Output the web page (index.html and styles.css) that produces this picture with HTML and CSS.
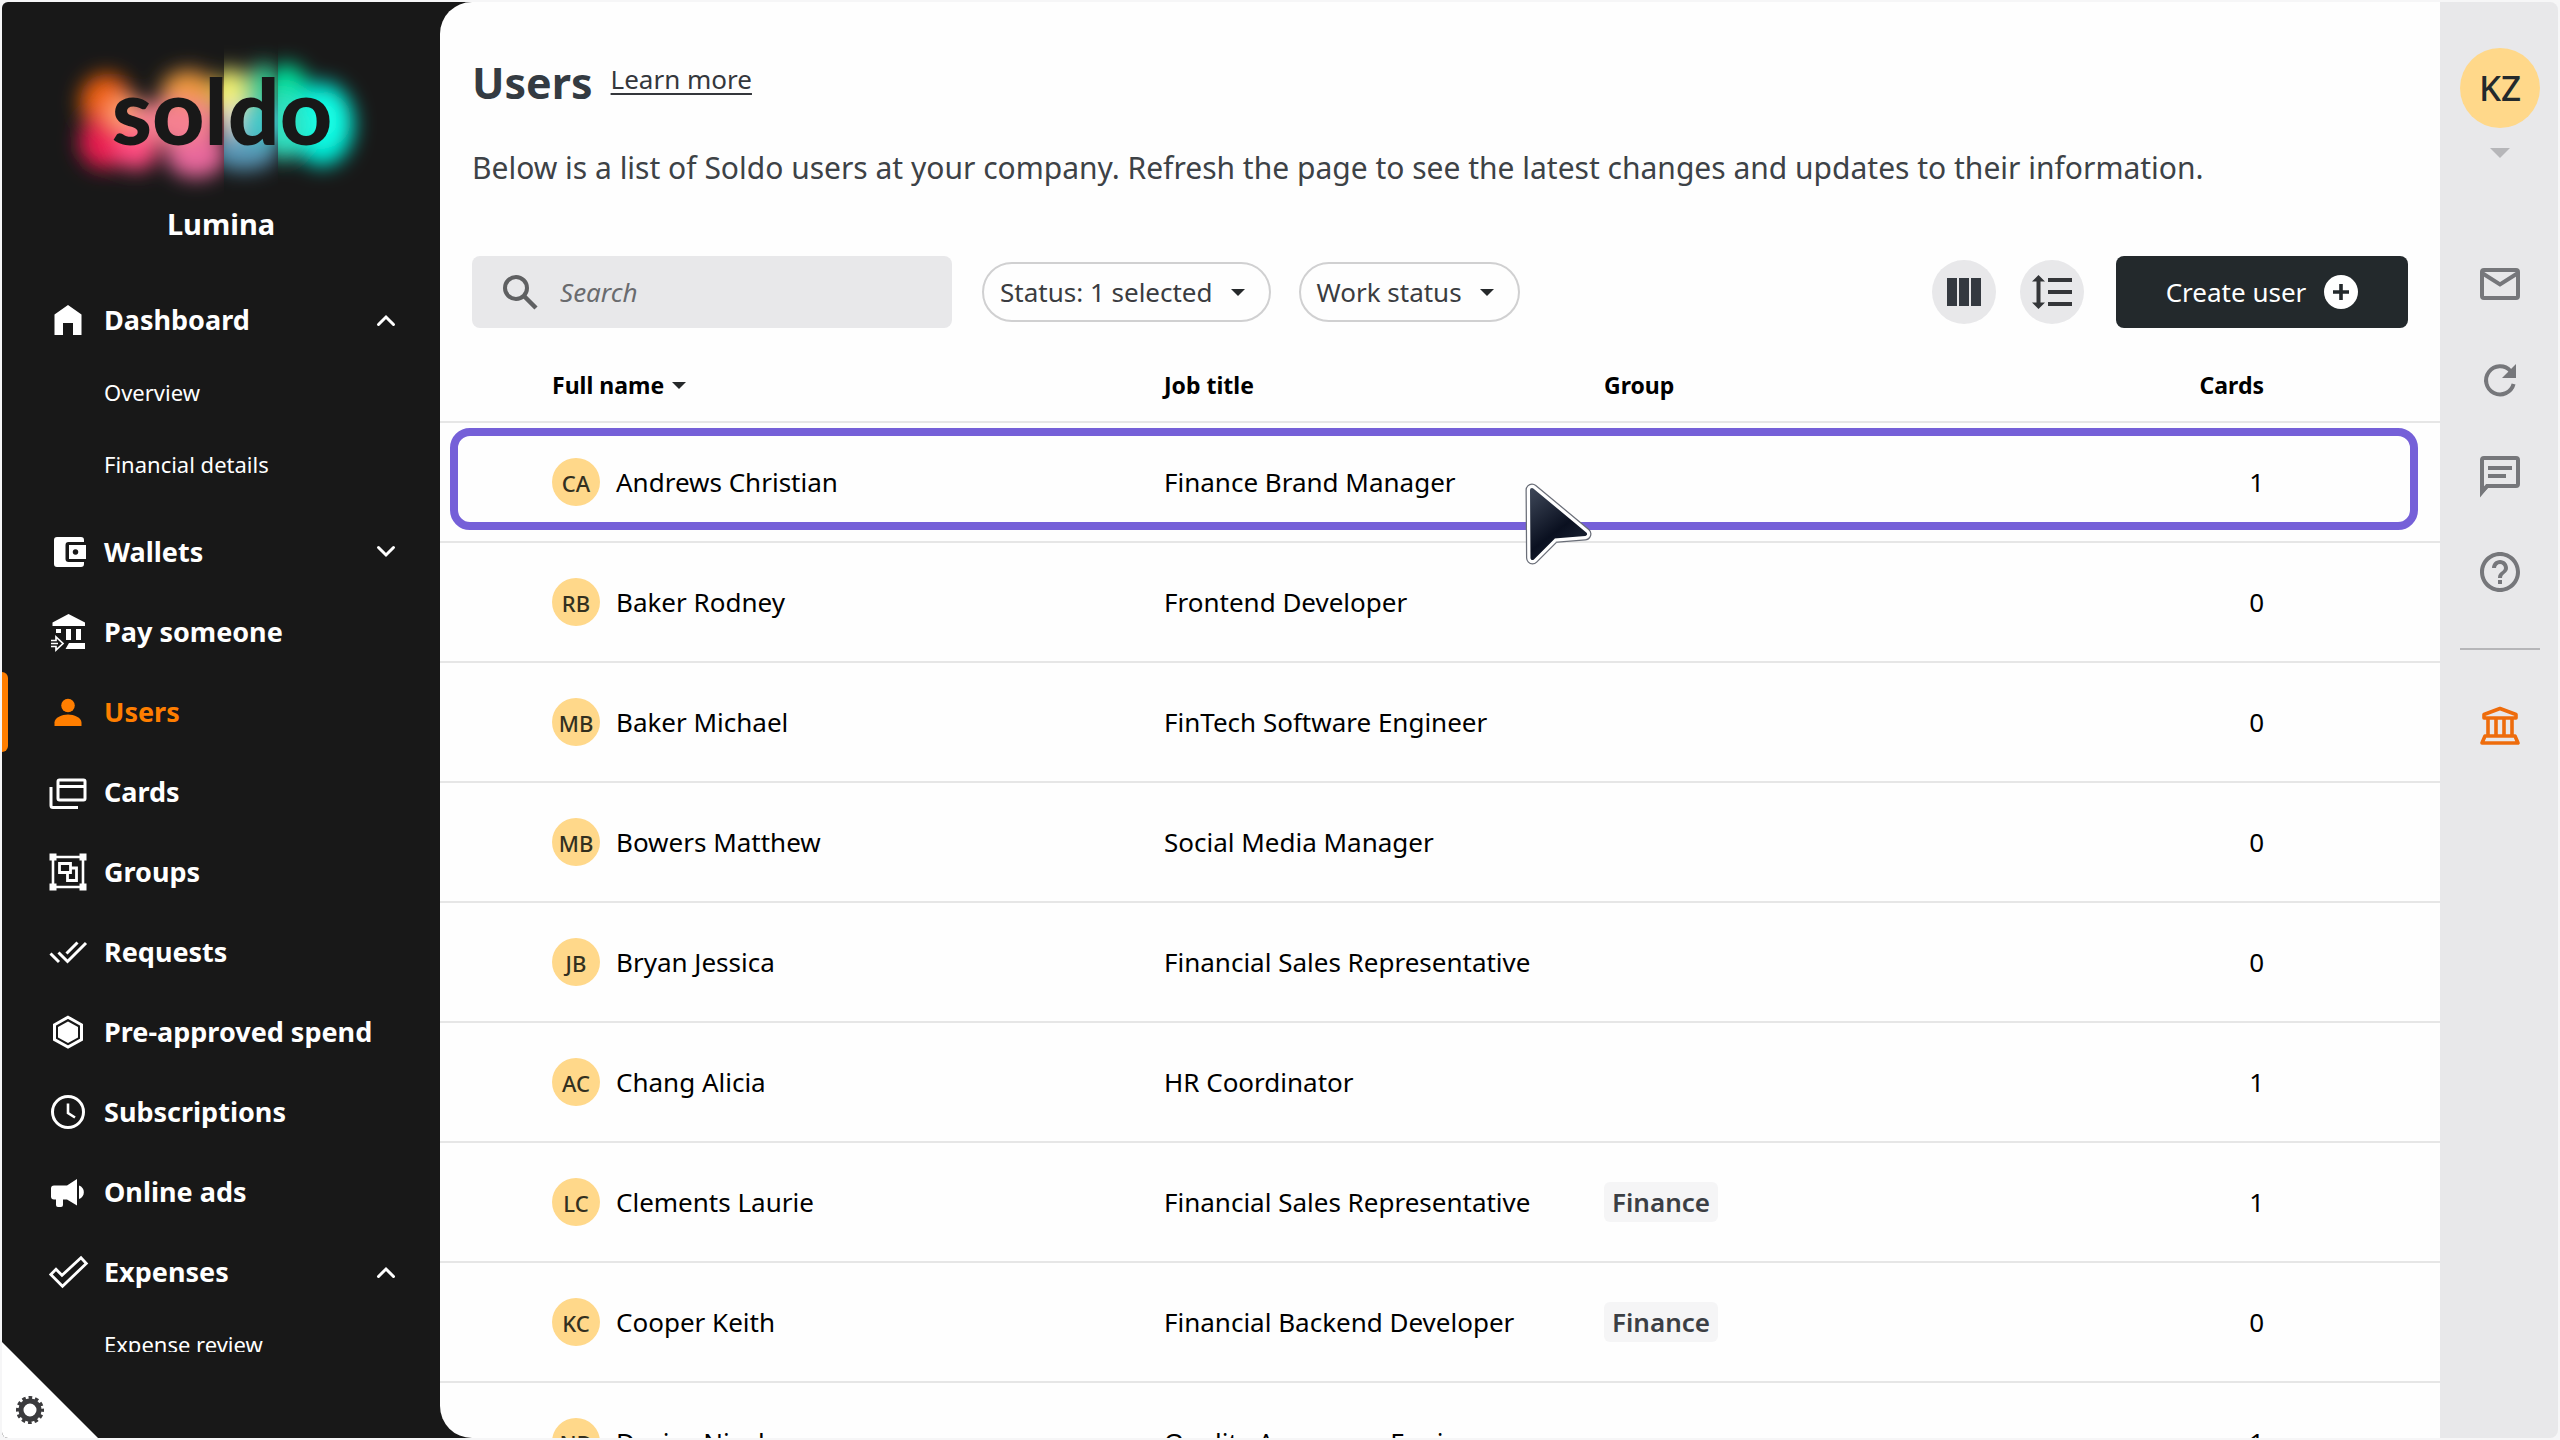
FILE: index.html
```
<!DOCTYPE html>
<html lang="en">
<head>
<meta charset="utf-8">
<meta name="viewport" content="width=device-width, initial-scale=1">
<title>Users - Soldo</title>
<link rel="stylesheet" href="styles.css">
</head>
<body>
<div class="app">
  <aside class="sidebar">
    <div class="brand">
      <svg class="brand-logo" viewBox="50 40 340 160" role="img" aria-label="soldo">
        <defs>
          <filter id="soft" x="-60%" y="-60%" width="220%" height="220%"><feGaussianBlur stdDeviation="10"/></filter>
          <clipPath id="clip-warm"><rect x="40" y="30" width="184" height="180"/></clipPath>
          <clipPath id="clip-mid"><rect x="224" y="30" width="54" height="180"/></clipPath>
          <clipPath id="clip-cool"><rect x="278" y="30" width="120" height="180"/></clipPath>
        </defs>
        <g clip-path="url(#clip-warm)">
          <g filter="url(#soft)">
            <ellipse cx="106" cy="102" rx="26" ry="28" fill="#f0600f"/>
            <ellipse cx="104" cy="142" rx="25" ry="27" fill="#e81f50"/>
            <ellipse cx="188" cy="92" rx="27" ry="22" fill="#f09a3c"/>
            <ellipse cx="136" cy="150" rx="22" ry="20" fill="#ff4a80"/>
            <ellipse cx="196" cy="154" rx="30" ry="24" fill="#e8689c"/>
            <ellipse cx="222" cy="94" rx="12" ry="18" fill="#c8b850"/>
            <ellipse cx="126" cy="114" rx="20" ry="18" fill="#ffa070"/>
            <ellipse cx="176" cy="122" rx="48" ry="22" fill="#f58090"/>
          </g>
        </g>
        <g clip-path="url(#clip-mid)">
          <g filter="url(#soft)">
            <ellipse cx="228" cy="94" rx="22" ry="26" fill="#f2f070"/>
            <ellipse cx="264" cy="88" rx="20" ry="24" fill="#30c890"/>
            <ellipse cx="244" cy="150" rx="34" ry="20" fill="#5898b8"/>
            <ellipse cx="232" cy="120" rx="16" ry="16" fill="#f0d8d0"/>
            <ellipse cx="264" cy="122" rx="28" ry="20" fill="#40c8c8"/>
          </g>
        </g>
        <g clip-path="url(#clip-cool)">
          <g filter="url(#soft)">
            <ellipse cx="286" cy="94" rx="24" ry="30" fill="#00e09c"/>
            <ellipse cx="322" cy="124" rx="32" ry="42" fill="#00ecd8"/>
            <ellipse cx="282" cy="126" rx="24" ry="34" fill="#30e0c0"/>
            <ellipse cx="326" cy="120" rx="18" ry="24" fill="#18ffe6"/>
          </g>
        </g>
        <text class="brand-word" x="222" y="145" text-anchor="middle">soldo</text>
      </svg>
      <p class="brand-name">Lumina</p>
    </div>
    <nav class="nav" aria-label="Main">
      <ul class="nav-list">
        <li>
          <a class="nav-item" href="#dashboard">
            <svg class="nav-icon" viewBox="0 0 36 36"><path d="M18 3L31.5 12.500V33H23V21H13V33H4.500V12.500z" fill="currentColor"/></svg>
            <span>Dashboard</span>
            <svg class="chevron" viewBox="0 0 18 12"><path d="M1.500 10.500L9 3l7.500 7.500"/></svg>
          </a>
          <ul class="sub-list">
            <li><a class="sub-item" href="#overview">Overview</a></li>
            <li><a class="sub-item" href="#financial">Financial details</a></li>
          </ul>
        </li>
        <li>
          <a class="nav-item" href="#wallets">
            <svg class="nav-icon" viewBox="0 0 36 36"><path fill="currentColor" d="M7 3H31a3 3 0 0 1 3 3V8H18.500a3 3 0 0 0-3 3V25a3 3 0 0 0 3 3H34V30a3 3 0 0 1-3 3H7a3 3 0 0 1-3-3V6a3 3 0 0 1 3-3z"/><path fill="currentColor" fill-rule="evenodd" d="M19 11H36V25H19zM25.500 15.200a2.800 2.800 0 1 0 .01 0z"/></svg>
            <span>Wallets</span>
            <svg class="chevron" viewBox="0 0 18 12"><path d="M1.500 1.500L9 9l7.500-7.500"/></svg>
          </a>
        </li>
        <li>
          <a class="nav-item" href="#pay">
            <svg class="nav-icon" viewBox="0 0 36 36"><path fill="currentColor" d="M18.500 0L35 8.500V12H2.500V8.500zM6 15h5v4H6zM16 15h5v11h-5zM26 15h5v11h-5zM19 29H35v6H15.500z"/><path fill="none" stroke="currentColor" stroke-width="1.700" d="M1 26.500H6V23L13 29.500L6 36V32.500H1M1 29.500H8"/></svg>
            <span>Pay someone</span>
          </a>
        </li>
        <li>
          <a class="nav-item active" href="#users" aria-current="page">
            <svg class="nav-icon" viewBox="0 0 36 36"><circle cx="18" cy="11.500" r="6.800" fill="currentColor"/><path fill="currentColor" d="M4.500 32V28.500C4.500 23.500 12 20.500 18 20.500S31.500 23.500 31.500 28.500V32z"/></svg>
            <span>Users</span>
          </a>
        </li>
        <li>
          <a class="nav-item" href="#cards">
            <svg class="nav-icon" viewBox="0 0 36 36"><g fill="none" stroke="currentColor" stroke-width="3"><rect x="8" y="6" width="27" height="20" rx="1.500"/><path d="M8 12.500H35M1 13V31.500a2 2 0 0 0 2 2H28"/></g></svg>
            <span>Cards</span>
          </a>
        </li>
        <li>
          <a class="nav-item" href="#groups">
            <svg class="nav-icon" viewBox="0 0 36 36"><path fill="none" stroke="currentColor" stroke-width="2.600" d="M3 3H33V33H3z"/><path fill="currentColor" d="M-.5-.5h7v7h-7zM29.500-.5h7v7h-7zM-.5 29.500h7v7h-7zM29.500 29.500h7v7h-7z"/><path fill="none" stroke="currentColor" stroke-width="2.800" d="M9.500 9.500H20.500V18.500H9.500zM20.500 14H26.500V26.500H17.500V18.500"/></svg>
            <span>Groups</span>
          </a>
        </li>
        <li>
          <a class="nav-item" href="#requests">
            <svg class="nav-icon" viewBox="0 0 36 36"><path fill="none" stroke="currentColor" stroke-width="3" d="M.5 19.500L9 28M8.500 18.500L17.500 27.500L36 9M16.500 19.500L27.500 8.500"/></svg>
            <span>Requests</span>
          </a>
        </li>
        <li>
          <a class="nav-item" href="#preapproved">
            <svg class="nav-icon" viewBox="0 0 36 36"><path fill="none" stroke="currentColor" stroke-width="3" d="M18 3.200L31.500 10.800V25.500L18 33L4.500 25.500V10.800z"/><path fill="currentColor" d="M18 7.500L28 13V23.500L18 29L8 23.500V13z"/></svg>
            <span>Pre-approved spend</span>
          </a>
        </li>
        <li>
          <a class="nav-item" href="#subscriptions">
            <svg class="nav-icon" viewBox="0 0 36 36"><circle cx="18" cy="18" r="15.500" fill="none" stroke="currentColor" stroke-width="3"/><path fill="none" stroke="currentColor" stroke-width="2.600" d="M18 9.500V19L25 23.500"/></svg>
            <span>Subscriptions</span>
          </a>
        </li>
        <li>
          <a class="nav-item" href="#ads">
            <svg class="nav-icon" viewBox="0 0 36 36"><path fill="currentColor" d="M4 11.500H17L27 5V31.500L17 25.500H13V31a2 2 0 0 1-2 2H8a2 2 0 0 1-2-2V25.500H4a3 3 0 0 1-3-3V14.500a3 3 0 0 1 3-3zM29 11.500c6.500 2 6.500 11.500 0 13.500z"/></svg>
            <span>Online ads</span>
          </a>
        </li>
        <li>
          <a class="nav-item" href="#expenses">
            <svg class="nav-icon" viewBox="0 0 36 36"><path fill="none" stroke="currentColor" stroke-width="2.800" d="M.8 20.500L6 15.300L12 21.300L31 3.800L36.300 9.500L12.500 32.200z"/></svg>
            <span>Expenses</span>
            <svg class="chevron" viewBox="0 0 18 12"><path d="M1.500 10.500L9 3l7.500 7.500"/></svg>
          </a>
          <ul class="sub-list">
            <li><a class="sub-item" href="#review">Expense review</a></li>
          </ul>
        </li>
      </ul>
    </nav>
    <div class="sidebar-foot">
      <button class="settings" type="button" aria-label="Settings">
        <svg viewBox="-14 -14 28 28"><circle r="9" fill="none" stroke="#3b3b3d" stroke-width="5"/><circle r="12.200" fill="none" stroke="#3b3b3d" stroke-width="3.600" stroke-dasharray="3.600 2.790" stroke-dashoffset="1.800"/></svg>
      </button>
    </div>
  </aside>

  <main class="main">
    <header class="page-head">
      <div class="title-row">
        <h1>Users</h1>
        <a class="learn" href="#learn">Learn more</a>
      </div>
      <p class="intro">Below is a list of Soldo users at your company. Refresh the page to see the latest changes and updates to their information.</p>
    </header>

    <div class="toolbar">
      <label class="search">
        <svg viewBox="0 0 36 36" aria-hidden="true"><circle cx="14" cy="14" r="11" fill="none" stroke="#5f6062" stroke-width="4"/><path d="M22 22L34 34" stroke="#5f6062" stroke-width="4.500"/></svg>
        <input type="search" placeholder="Search" aria-label="Search">
      </label>
      <div class="filters">
        <button class="pill" type="button">Status: 1 selected <span class="caret"></span></button>
        <button class="pill" type="button">Work status <span class="caret"></span></button>
      </div>
      <div class="tools">
        <button class="round" type="button" aria-label="Columns">
          <svg viewBox="0 0 40 40"><path fill="#343940" d="M3 6h10v28H3zM15 6h10v28H15zM27 6h10v28H27z"/></svg>
        </button>
        <button class="round" type="button" aria-label="Row height">
          <svg viewBox="0 0 40 40"><path fill="#343639" d="M6.500 3L13 9.500H8.500V30.500H13L6.500 37L0 30.500H4.500V9.500H0zM16 6h24v4H16zM16 18h24v4H16zM16 30h24v4H16z"/></svg>
        </button>
      </div>
      <button class="create" type="button">Create user
        <svg viewBox="0 0 34 34"><circle cx="17" cy="17" r="17" fill="#fff"/><path d="M17 9V25M9 17H25" stroke="#23292c" stroke-width="3.600"/></svg>
      </button>
    </div>

    <div class="table-area">
      <table class="users">
        <colgroup><col class="c-name"><col class="c-job"><col class="c-group"><col class="c-cards"></colgroup>
        <thead>
          <tr><th scope="col">Full name <span class="caret"></span></th><th scope="col">Job title</th><th scope="col">Group</th><th scope="col">Cards</th></tr>
        </thead>
        <tbody>
          <tr><td><div class="person"><span class="avatar">CA</span>Andrews Christian</div></td><td>Finance Brand Manager</td><td></td><td>1</td></tr>
          <tr><td><div class="person"><span class="avatar">RB</span>Baker Rodney</div></td><td>Frontend Developer</td><td></td><td>0</td></tr>
          <tr><td><div class="person"><span class="avatar">MB</span>Baker Michael</div></td><td>FinTech Software Engineer</td><td></td><td>0</td></tr>
          <tr><td><div class="person"><span class="avatar">MB</span>Bowers Matthew</div></td><td>Social Media Manager</td><td></td><td>0</td></tr>
          <tr><td><div class="person"><span class="avatar">JB</span>Bryan Jessica</div></td><td>Financial Sales Representative</td><td></td><td>0</td></tr>
          <tr><td><div class="person"><span class="avatar">AC</span>Chang Alicia</div></td><td>HR Coordinator</td><td></td><td>1</td></tr>
          <tr><td><div class="person"><span class="avatar">LC</span>Clements Laurie</div></td><td>Financial Sales Representative</td><td><span class="tag">Finance</span></td><td>1</td></tr>
          <tr><td><div class="person"><span class="avatar">KC</span>Cooper Keith</div></td><td>Financial Backend Developer</td><td><span class="tag">Finance</span></td><td>0</td></tr>
          <tr><td><div class="person"><span class="avatar">ND</span>Davies Nicola</div></td><td>Quality Assurance Engineer</td><td></td><td>1</td></tr>
        </tbody>
      </table>
      <div class="highlight"></div>
      <svg class="pointer" viewBox="0 0 66 82" aria-hidden="true">
        <defs><linearGradient id="ink" x1="0" y1="0" x2="0.6" y2="1"><stop offset="0" stop-color="#3c4556"/><stop offset="0.650" stop-color="#0a1020"/><stop offset="1" stop-color="#1a2232"/></linearGradient></defs>
        <path d="M7 7L60 51L29 53.500L7.500 75z" fill="#6a6e78" stroke="#6a6e78" stroke-width="13" stroke-linejoin="round"/>
        <path d="M7 7L60 51L29 53.500L7.500 75z" fill="#fff" stroke="#fff" stroke-width="10.500" stroke-linejoin="round"/>
        <path d="M7 7L60 51L29 53.500L7.500 75z" fill="url(#ink)" stroke="url(#ink)" stroke-width="4" stroke-linejoin="round"/>
      </svg>
    </div>
  </main>

  <aside class="rail">
    <button class="account" type="button" aria-label="Account"><span class="account-badge">KZ</span><span class="account-caret"></span></button>
    <div class="rail-tools">
      <button class="rail-btn" type="button" aria-label="Mail"><svg viewBox="0 0 40 40"><g fill="none" stroke="#76777b" stroke-width="4"><rect x="2" y="6" width="36" height="28" rx="2"/><path d="M2 9L20 20.500L38 9"/></g></svg></button>
      <button class="rail-btn" type="button" aria-label="Refresh"><svg viewBox="0 0 40 40"><path fill="none" stroke="#76777b" stroke-width="4" d="M30.500 11A14 14 0 1 0 33.600 24"/><path fill="#76777b" d="M36 4V18H22z"/></svg></button>
      <button class="rail-btn" type="button" aria-label="Messages"><svg viewBox="0 0 40 40"><path fill="none" stroke="#76777b" stroke-width="4" d="M2 36V4a2 2 0 0 1 2-2H36a2 2 0 0 1 2 2V28a2 2 0 0 1-2 2H7z"/><path fill="#76777b" d="M0 30V40L9 31zM8 10H32v4H8zM8 18H26v4H8z"/></svg></button>
      <button class="rail-btn" type="button" aria-label="Help"><svg viewBox="2 2 20 20"><path fill="#76777b" d="M11 18h2v-2h-2v2zm1-16C6.480 2 2 6.480 2 12s4.480 10 10 10 10-4.480 10-10S17.520 2 12 2zm0 18c-4.410 0-8-3.590-8-8s3.590-8 8-8 8 3.590 8 8-3.590 8-8 8zm0-14c-2.210 0-4 1.790-4 4h2c0-1.100.9-2 2-2s2 .9 2 2c0 2-3 1.750-3 5h2c0-2.250 3-2.500 3-5 0-2.210-1.790-4-4-4z"/></svg></button>
    </div>
    <hr class="rail-line">
    <button class="rail-btn" type="button" aria-label="Bank"><svg viewBox="0 0 40 40"><g fill="none" stroke="#ee6c0c" stroke-width="3.600" stroke-linejoin="round"><path d="M4 8.500L20 2.500L36 8.500V12H4z"/><path d="M8 13V29M16 13V29M24 13V29M32 13V29M5 30H35L38 37H2z"/></g></svg></button>
  </aside>
</div>
</body>
</html>
```
FILE: styles.css
```
* { box-sizing: border-box; }
body { margin: 0; background: #f6f6f7; font-family: "Noto Sans", "Open Sans", sans-serif; font-size: 26px; color: #000; }
ul { list-style: none; margin: 0; padding: 0; }
a { color: inherit; text-decoration: none; }
button { border: 0; padding: 0; margin: 0; background: none; font: inherit; color: inherit; cursor: pointer; }
svg { display: block; overflow: visible; flex: none; }

.app { display: flex; height: 100vh; padding: 2px; overflow: hidden; }

.sidebar { display: flex; flex-direction: column; flex: none; width: 470px; margin-right: -32px; border-radius: 6px 0 0 6px; background: #181818; color: #fff; overflow: hidden; }
.brand { width: 438px; height: 278px; flex: none; padding-top: 38px; }
.brand-logo { width: 340px; height: 160px; margin-left: 48px; }
.brand-word { font-family: Lato, sans-serif; font-weight: 900; font-size: 91px; fill: #181818; }
.brand-name { margin: 4px 0 0; text-align: center; font-size: 29px; line-height: 40px; font-weight: 700; }

.nav { flex: 1; width: 438px; min-height: 0; overflow: hidden; }
.nav-item { display: flex; align-items: center; gap: 18px; height: 80px; padding: 0 45px 0 48px; font-size: 27px; line-height: 36px; font-weight: 700; }
.nav-icon { width: 36px; height: 36px; }
.nav-item.active { position: relative; color: #ff7e00; }
.nav-item.active::before { content: ""; position: absolute; left: 0; top: 0; width: 6px; height: 80px; border-radius: 0 6px 6px 0; background: #ff7e00; }
.chevron { width: 18px; height: 12px; margin-left: auto; fill: none; stroke: #fff; stroke-width: 3; stroke-linecap: round; }
.sub-list { margin-top: -4px; padding-bottom: 12px; }
.sub-item { display: block; height: 72px; line-height: 72px; padding-left: 102px; font-size: 22px; }
.sidebar-foot { flex: none; height: 86px; display: flex; align-items: flex-end; }
.settings { display: flex; align-items: flex-end; width: 96px; height: 96px; flex: none; padding: 0 0 14px 14px; background: #fff; clip-path: polygon(0 0, 100% 100%, 0 100%); }
.settings svg { width: 28px; height: 28px; }

.main { position: relative; display: flex; flex-direction: column; flex: 1; min-width: 0; border-radius: 32px 0 0 32px; background: #fefefe; overflow: hidden; }
.page-head { padding: 50px 32px 0; }
.title-row { display: flex; align-items: flex-start; gap: 18px; color: #343b42; }
h1 { margin: 0; font-size: 43px; line-height: 62px; font-weight: 700; }
.learn { color: #34373c; text-decoration: underline; text-decoration-thickness: 2px; text-underline-offset: 4px; line-height: 54px; }
.intro { margin: 32px 0 0; font-size: 30px; line-height: 44px; color: #3d4246; }

.toolbar { display: flex; align-items: center; height: 72px; margin-top: 66px; padding: 0 32px; }
.search { display: flex; align-items: center; gap: 22px; width: 480px; height: 72px; padding: 0 30px; border-radius: 8px; background: #e8e8ea; }
.search svg { width: 36px; height: 36px; }
.search input { flex: 1; min-width: 0; border: 0; outline: 0; padding: 0; background: none; font: inherit; font-style: italic; color: #5f6062; }
.search input::placeholder { color: #6a6b6e; opacity: 1; }
.filters { display: flex; gap: 28px; margin-left: 30px; }
.pill { display: flex; align-items: center; gap: 18px; height: 60px; padding: 0 24px 0 16px; border: 2px solid #d0d0d1; border-radius: 30px; color: #3a3c40; white-space: nowrap; }
.caret { display: inline-block; border: 7px solid transparent; border-top-color: #26292b; border-bottom: 0; }
.tools { display: flex; gap: 24px; margin: 0 32px 0 auto; }
.round { display: flex; align-items: center; justify-content: center; width: 64px; height: 64px; border-radius: 50%; background: #e8e8ea; }
.round svg { width: 40px; height: 40px; }
.create { display: flex; align-items: center; justify-content: center; gap: 18px; width: 292px; height: 72px; border-radius: 8px; background: #23292c; color: #fff; }
.create svg { width: 34px; height: 34px; }

.table-area { position: relative; }
.users { width: 100%; table-layout: fixed; border-collapse: collapse; white-space: nowrap; }
.c-name { width: 36.2%; }
.c-job { width: 22%; }
.c-cards { width: 20%; }
.users th { height: 94px; padding: 20px 0 0; border-bottom: 2px solid #e6e6e6; text-align: left; font-size: 23px; font-weight: 700; }
.users td { height: 120px; padding: 0; border-bottom: 2px solid #e6e6e6; }
.users th:first-child, .users td:first-child { padding-left: 112px; }
.users th:last-child, .users td:last-child { padding-right: 176px; text-align: right; }
.users th .caret { margin-left: 2px; vertical-align: 5px; }
.person { display: flex; align-items: center; gap: 16px; }
.avatar { width: 48px; height: 48px; border-radius: 50%; background: #ffd88a; color: #33301f; font-size: 22px; line-height: 50px; font-weight: 500; text-align: center; }
.tag { display: inline-block; padding: 0 8px; border-radius: 6px; background: #f5f5f6; color: #3c3f44; line-height: 40px; font-weight: 600; }
.highlight { position: absolute; left: 10px; right: 22px; top: 100px; height: 102px; border: 8px solid #7560d8; border-radius: 20px; }
.pointer { position: absolute; left: 1085px; top: 155px; width: 66px; height: 82px; }

.rail { display: flex; flex-direction: column; align-items: center; flex: none; width: 118px; padding: 46px 0 0 2px; border-radius: 0 8px 8px 0; background: #e8e8ea; }
.account { display: flex; flex-direction: column; align-items: center; gap: 20px; }
.account-badge { width: 80px; height: 80px; border-radius: 50%; background: #ffd88a; color: #23292c; font-size: 35px; line-height: 80px; font-weight: 500; }
.account-caret { border: 10px solid transparent; border-top-color: #b6b6b9; border-bottom: 0; }
.rail-tools { display: flex; flex-direction: column; gap: 56px; margin-top: 106px; }
.rail-btn { width: 40px; height: 40px; }
.rail-btn svg { width: 40px; height: 40px; }
.rail-line { width: 80px; height: 2px; margin: 56px 0; border: 0; background: #b6b6b9; }
```
